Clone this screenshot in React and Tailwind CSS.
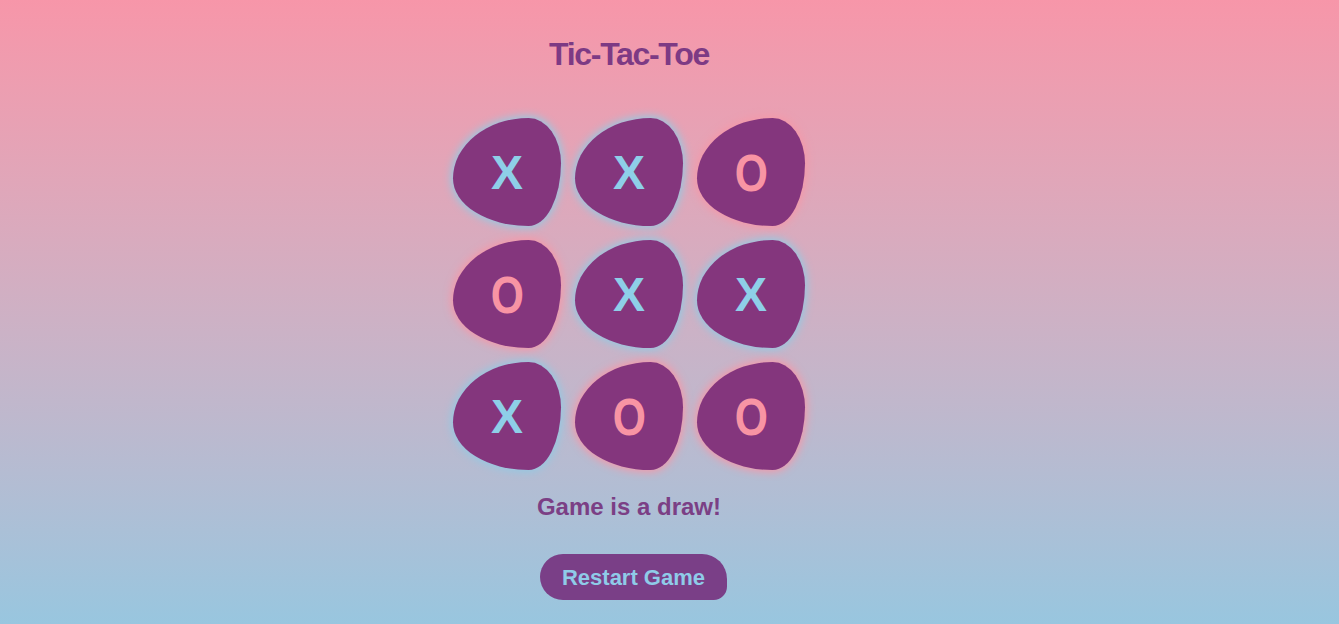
import React from "react";

const board = ["X", "X", "O", "O", "X", "X", "X", "O", "O"];

function Cell({ v }) {
  const isX = v === "X";
  return (
    <div
      className={
        "w-[108px] h-[108px] flex items-center justify-center bg-[#84367d] rounded-[70%_30%_30%_70%/56%_42%_58%_44%] " +
        (isX ? "shadow-[0_0_9px_2px_#93c9e3]" : "shadow-[0_0_9px_2px_#f598a8]")
      }
    >
      <span
        className={
          "font-bold leading-none " +
          (isX
            ? "text-[48px] text-[#8ecfe8] mt-[2px]"
            : "text-[52px] text-[#f894a4] scale-x-[0.82] mt-[2px]")
        }
        style={{ fontFamily: '"Liberation Sans", Arial, sans-serif' }}
      >
        {v}
      </span>
    </div>
  );
}

export default function App() {
  return (
    <div
      className="min-h-[624px] w-full bg-gradient-to-b from-[#f796a9] to-[#98c6df] flex flex-col items-center pr-[81px]"
      style={{ fontFamily: '"Liberation Sans", Arial, sans-serif' }}
    >
      <h1 className="mt-[34px] text-[32px] font-bold leading-[40px] tracking-[-1.3px] text-[#7d3a84]">
        Tic-Tac-Toe
      </h1>
      <div className="mt-[44px] grid grid-cols-3 gap-[14px]">
        {board.map((v, i) => (
          <Cell key={i} v={v} />
        ))}
      </div>
      <p className="mt-[22px] text-[24px] font-bold leading-[30px] text-[#7b3f85]">
        Game is a draw!
      </p>
      <button className="mt-[32px] ml-[9px] h-[46px] px-[22px] bg-[#7a3f87] text-[#8fcbe8] text-[22px] font-bold rounded-[24px_26px_14px_24px]">
        Restart Game
      </button>
    </div>
  );
}
